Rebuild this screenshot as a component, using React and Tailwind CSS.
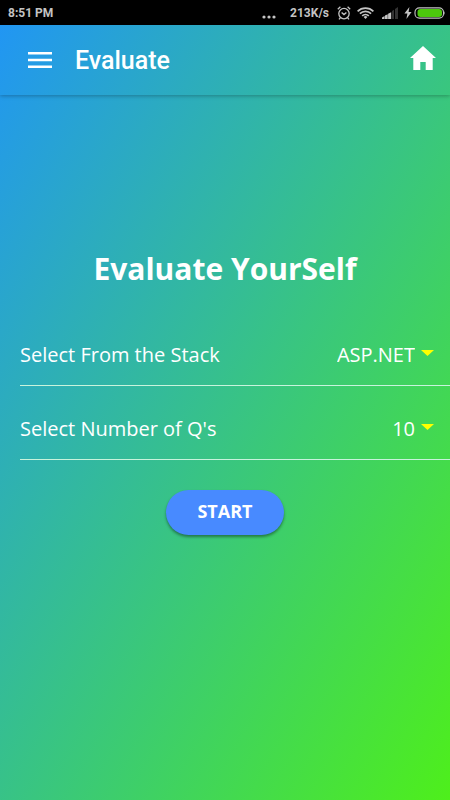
import { useState } from "react";

const stacks = ["ASP.NET", "Angular", "Java", "PHP"];
const counts = ["10", "20", "30"];

function StatusBar() {
  return (
    <div className="flex h-[25px] shrink-0 items-center justify-between bg-black pl-2 pr-1 font-['Roboto',sans-serif] text-[12px] font-bold text-[#c4c4c4]">
      <span>8:51 PM</span>
      <div className="flex items-center">
        <svg className="mt-2 mr-3.5 h-1 w-3.5" viewBox="0 0 14 4" fill="currentColor" aria-hidden="true">
          <circle cx="2" cy="2" r="1.6" />
          <circle cx="7" cy="2" r="1.6" />
          <circle cx="12" cy="2" r="1.6" />
        </svg>
        <span className="mr-2">213K/s</span>
        {/* alarm */}
        <svg className="mr-1.5 size-3.5" viewBox="0 0 14 14" fill="none" stroke="currentColor" strokeWidth="1.3" aria-hidden="true">
          <circle cx="7" cy="7.6" r="5.2" />
          <path d="M4.6 6.4 7 8.6l2.4-2.2M.8 3.2 3.4.8M13.2 3.2 10.6.8M3.4 11.8 2 13.4M10.6 11.8l1.4 1.6" />
        </svg>
        {/* wifi */}
        <svg className="mr-2 h-3 w-[17px]" viewBox="0 0 17 12" fill="none" stroke="currentColor" strokeWidth="1.7" aria-hidden="true">
          <path d="M.6 4.3a11.3 11.3 0 0 1 15.8 0M2.9 6.6a8 8 0 0 1 11.2 0M5.2 8.9a4.7 4.7 0 0 1 6.6 0" />
          <path d="M8.5 12 6.6 10a2.7 2.7 0 0 1 3.8 0z" fill="currentColor" stroke="none" />
        </svg>
        {/* signal */}
        <svg className="mr-1.5 h-3 w-4" viewBox="0 0 16 12" aria-hidden="true">
          <path d="M0 12V10.6L2.6 9v3zM3 12V8.6l2.7-1.4V12zM6.1 12V6.8l3.1-1.6V12z" fill="#c4c4c4" />
          <path d="M10 12V4l2-1.2V12zM13 12V2l3-2v12z" fill="#333333" />
        </svg>
        <svg className="h-3 w-2" viewBox="0 0 8 12" fill="currentColor" aria-hidden="true">
          <path d="M5.4 0 .4 6.6h3L2.4 12l5.2-7H4.6z" />
        </svg>
        {/* battery */}
        <svg className="ml-0.5 h-3 w-8" viewBox="0 0 32 12" aria-hidden="true">
          <rect x="1" y=".9" width="28.5" height="10.2" rx="4.4" fill="none" stroke="#c4c4c4" strokeWidth="1.1" />
          <path d="M30 4v4q1.4-2 0-4z" fill="#c4c4c4" />
          <rect x="3.5" y="1.9" width="24.5" height="8.2" rx="3" fill="#4cc80c" />
        </svg>
      </div>
    </div>
  );
}

function SelectRow({ id, label, value, options, onChange }) {
  return (
    <div className="ml-5 flex h-[74px] items-center border-b border-[#c8f3dc] pt-3 pr-4 text-[20px] text-white">
      <label htmlFor={id} className="flex-1">
        {label}
      </label>
      <select
        id={id}
        value={value}
        onChange={(e) => onChange(e.target.value)}
        className="field-sizing-content appearance-none bg-transparent text-right outline-none"
      >
        {options.map((option) => (
          <option key={option} className="text-black">
            {option}
          </option>
        ))}
      </select>
      <svg className="mb-1 ml-1.5 h-1.5 w-[13px]" viewBox="0 0 13 6" fill="#ffff00" aria-hidden="true">
        <path d="M0 0h13L6.5 6z" />
      </svg>
    </div>
  );
}

export default function App() {
  const [stack, setStack] = useState("ASP.NET");
  const [count, setCount] = useState("10");

  return (
    <div className="flex min-h-screen flex-col font-['Open_Sans',sans-serif]">
      <StatusBar />
      <div className="flex flex-1 flex-col bg-[linear-gradient(to_bottom_right,#2196f3,#4eef1b)]">
        <header className="flex h-[70px] items-center pl-7 pr-3.5 text-white shadow-[0_1px_4px_rgba(0,0,0,0.28)]">
          <button type="button" aria-label="Menu">
            <svg className="h-4 w-6" viewBox="0 0 24 16" fill="currentColor" aria-hidden="true">
              <path d="M0 0h24v2.6H0zM0 6.7h24v2.6H0zM0 13.4h24V16H0z" />
            </svg>
          </button>
          <h1 className="ml-[23px] flex-1 pt-0.5 font-['Roboto',sans-serif] text-[25px] font-medium">Evaluate</h1>
          <button type="button" aria-label="Home">
            <svg className="mb-1 h-6 w-[26px]" viewBox="0 0 26 24" fill="currentColor" aria-hidden="true">
              <path d="M13 0 26 12h-3.3v12h-7v-8h-5.4v8h-7V12H0z" />
            </svg>
          </button>
        </header>

        <main className="flex flex-col pt-[152px]">
          <h2 className="text-center text-[30px] leading-[44px] font-bold text-white">Evaluate YourSelf</h2>
          <div className="mt-[21px]">
            <SelectRow id="stack" label="Select From the Stack" value={stack} options={stacks} onChange={setStack} />
            <SelectRow id="count" label="Select Number of Q's" value={count} options={counts} onChange={setCount} />
          </div>
          <button
            type="button"
            className="mt-[30px] h-[45px] w-[118px] self-center rounded-full bg-[#488aff] pb-0.5 text-[18px] font-bold text-white shadow-[0_2px_3px_rgba(0,0,0,0.4)]"
          >
            START
          </button>
        </main>
      </div>
    </div>
  );
}
